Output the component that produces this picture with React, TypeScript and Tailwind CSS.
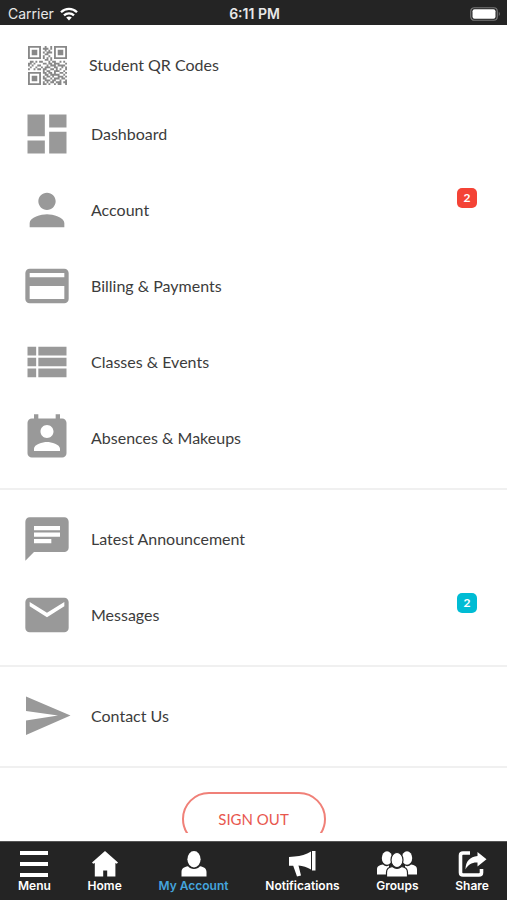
import type { ReactNode } from "react";
import {
  MdChat,
  MdDashboard,
  MdEmail,
  MdPayment,
  MdPermContactCalendar,
  MdPerson,
} from "react-icons/md";

const QR_ROWS = [
  "111111100100101111111",
  "100000101110101000001",
  "101110100101001011101",
  "101110101011101011101",
  "101110100110001011101",
  "100000101001001000001",
  "111111101010101111111",
  "000000000110100000000",
  "011010110001011001010",
  "110100001101101110001",
  "101001100010111011110",
  "010010010111001100101",
  "100101101100110101001",
  "000000001011001110010",
  "111111101101101001101",
  "100000100110111110010",
  "101110101011010011101",
  "101110101100101110110",
  "101110100111011001001",
  "100000101010110111011",
  "111111101101001011001",
];

// one path for all the modules, so no seams show between neighbours
const QR_PATH = QR_ROWS.map((row, y) =>
  row
    .split("")
    .map((cell, x) => (cell === "1" ? `M${x} ${y}h1v1h-1z` : ""))
    .join("")
).join("");

function QrIcon() {
  return (
    <svg className="size-[39px]" viewBox="0 0 21 21" fill="currentColor" aria-hidden="true">
      <path d={QR_PATH} />
    </svg>
  );
}

function ListIcon() {
  return (
    <svg className="size-13" viewBox="0 0 24 24" fill="currentColor" aria-hidden="true">
      <path d="M3 14h4v-4H3v4zm0 5h4v-4H3v4zM3 9h4V5H3v4zm5 5h13v-4H8v4zm0 5h13v-4H8v4zM8 5v4h13V5H8z" />
    </svg>
  );
}

function SendIcon() {
  return (
    <svg className="size-13" viewBox="0 0 52 52" fill="currentColor" aria-hidden="true">
      <path d="M5 6.5 49.5 25.5 5 45V30.5L37 25.5 5 21z" />
    </svg>
  );
}

type Item = { label: string; icon: ReactNode; badge?: number; badgeClass?: string };

const sections: Item[][] = [
  [
    { label: "Dashboard", icon: <MdDashboard className="size-13" /> },
    { label: "Account", icon: <MdPerson className="size-13" />, badge: 2, badgeClass: "bg-[#f44336]" },
    { label: "Billing & Payments", icon: <MdPayment className="size-13" /> },
    { label: "Classes & Events", icon: <ListIcon /> },
    { label: "Absences & Makeups", icon: <MdPermContactCalendar className="size-13" /> },
  ],
  [
    { label: "Latest Announcement", icon: <MdChat className="size-13" /> },
    { label: "Messages", icon: <MdEmail className="size-13" />, badge: 2, badgeClass: "bg-[#00bcd4]" },
  ],
  [{ label: "Contact Us", icon: <SendIcon /> }],
];

function MenuRow({ item }: { item: Item }) {
  return (
    <li>
      <a href="#" className="flex h-19 items-center pr-[30px] pl-[21px]">
        <span className="text-[#999]">{item.icon}</span>
        <span className="ml-[18px] flex-1">{item.label}</span>
        {item.badge && (
          <span
            className={`mb-6 flex size-5 items-center justify-center rounded-[5px] text-xs font-bold text-white ${item.badgeClass}`}
          >
            {item.badge}
          </span>
        )}
      </a>
    </li>
  );
}

const tabs = [
  {
    label: "Menu",
    width: "w-[30px]",
    box: "0 0 30 26",
    drawing: <path d="M1 0h28v4H1zM1 11h28v4H1zM1 22h28v4H1z" />,
  },
  {
    label: "Home",
    width: "w-[26px]",
    box: "0 0 26 26",
    drawing: <path d="M13 0 26 11.5 24.8 12.8 23.4 12V25.5H15.2V19.5H11.2V25.5H2.8V12L1.2 12.8 0 11.5z" />,
  },
  {
    label: "My Account",
    width: "w-[26px]",
    box: "0 0 26 26",
    drawing: (
      <>
        <ellipse cx="13" cy="8.2" rx="6.6" ry="8.2" />
        <path d="M.5 25.5V21C.5 17.5 3 15.8 7 15.2 8.5 17 10.5 18 13 18s4.5-1 6-2.8C23 15.8 25.5 17.5 25.5 21v4.5z" />
      </>
    ),
  },
  {
    label: "Notifications",
    width: "w-[27px]",
    box: "0 0 27 26",
    drawing: (
      <>
        <path d="M0 6 5.5 5.5C12 5 17 3.5 22 .5V18.5C18 16 14 15 9.5 14.5L12 24.5 8 25.5 4.2 14.8H0z" />
        <path d="M23 0h3.5v19.5H23z" />
      </>
    ),
  },
  {
    label: "Groups",
    width: "w-10",
    box: "0 0 40 26",
    drawing: (
      <>
        <ellipse cx="10" cy="7" rx="5.2" ry="6.8" />
        <ellipse cx="30" cy="7" rx="5.2" ry="6.8" />
        <path d="M0 23.500V18.500C0 15 2.500 14 6 13.500 8 15.500 10 15.500 12 14.500V23.500z" />
        <path d="M40 23.500V18.500C40 15 37.500 14 34 13.500 32 15.500 30 15.500 28 14.500V23.500z" />
        <g stroke="#242424" strokeWidth="1.2">
          <ellipse cx="20" cy="9" rx="6" ry="7.5" />
          <path d="M9.500 26V21.500C9.500 17.500 12 16 15.500 15.500 18.500 18 21.500 18 24.500 15.500 28 16 30.500 17.500 30.500 21.500V26z" />
        </g>
      </>
    ),
  },
  {
    label: "Share",
    width: "w-[29px]",
    box: "0 0 29 26",
    drawing: (
      <>
        <path
          d="M12 2H5Q2.500 2 2.500 4.500V21.500Q2.500 24 5 24H21Q23.500 24 23.500 21.500V18"
          fill="none"
          stroke="currentColor"
          strokeWidth="3.6"
        />
        <path d="M19.500 1 28.500 8.200 19.500 15.500V11.500C14 11.200 10 13.500 7.500 18.500 7.500 10.500 12 5.500 19.500 5z" />
      </>
    ),
  },
];

export default function App() {
  return (
    <div className="flex h-screen flex-col bg-white font-['Lato',sans-serif] text-base text-[#3c3c3c]">
      <header className="grid h-[25px] shrink-0 grid-cols-3 items-center bg-[#242424] pt-0.5 pr-1.5 pl-2 font-['Inter',sans-serif] text-sm text-[#e8e8e8]">
        <div className="flex items-center gap-1.5">
          <span>Carrier</span>
          <svg className="h-[14px] w-[18px]" viewBox="0 0 18 14" aria-label="Wi-Fi">
            <g fill="none" stroke="#fff" strokeWidth="2.3">
              <path d="M1 5.2C5.5.7 12.5.7 17 5.2" />
              <path d="M4 8.4c2.8-2.7 7.2-2.7 10 0" />
            </g>
            <path d="M9 13.5 6.2 10.6C7.800 9.200 10.200 9.200 11.800 10.600z" fill="#fff" />
          </svg>
        </div>
        <div className="text-center font-semibold">6:11 PM</div>
        <svg className="h-[14px] w-[31px] justify-self-end" viewBox="0 0 31 14" aria-label="Battery">
          <rect x=".75" y=".75" width="26.5" height="12.5" rx="3.5" fill="none" stroke="#777" strokeWidth="1.2" />
          <rect x="2.5" y="2.3" width="23" height="9.4" rx="2" fill="#fff" />
          <path d="M28.8 4.8q2 2.2 0 4.4z" fill="#777" />
        </svg>
      </header>

      <main className="mb-2 flex-1 overflow-y-auto [scrollbar-width:none]">
        <a href="#" className="mt-[9px] flex h-[62px] items-center pl-7">
          <span className="text-[#888]">
            <QrIcon />
          </span>
          <span className="ml-[22px]">Student QR Codes</span>
        </a>
        {sections.map((items, i) => (
          <ul key={i} className={`border-b-2 border-[#f0f0f0] pb-3 ${i > 0 ? "pt-[11px]" : ""}`}>
            {items.map((item) => (
              <MenuRow key={item.label} item={item} />
            ))}
          </ul>
        ))}
        <div className="flex justify-center py-6">
          <button
            type="button"
            className="h-[54px] w-36 shrink-0 rounded-full border-2 border-[#f08078] text-[15px] text-[#e8574e]"
          >
            SIGN OUT
          </button>
        </div>
      </main>

      <nav className="flex h-[59px] shrink-0 justify-between border-t border-[#555] bg-[#242424] px-[18px] pt-[9px] font-['Inter',sans-serif] text-xs font-semibold text-white">
        {tabs.map((tab) => (
          <a key={tab.label} href="#" className="flex flex-col items-center gap-px">
            <svg className={`h-[26px] ${tab.width}`} viewBox={tab.box} fill="white" color="white" aria-hidden="true">
              {tab.drawing}
            </svg>
            <span className={tab.label === "My Account" ? "text-[#44a5dd]" : ""}>{tab.label}</span>
          </a>
        ))}
      </nav>
    </div>
  );
}
